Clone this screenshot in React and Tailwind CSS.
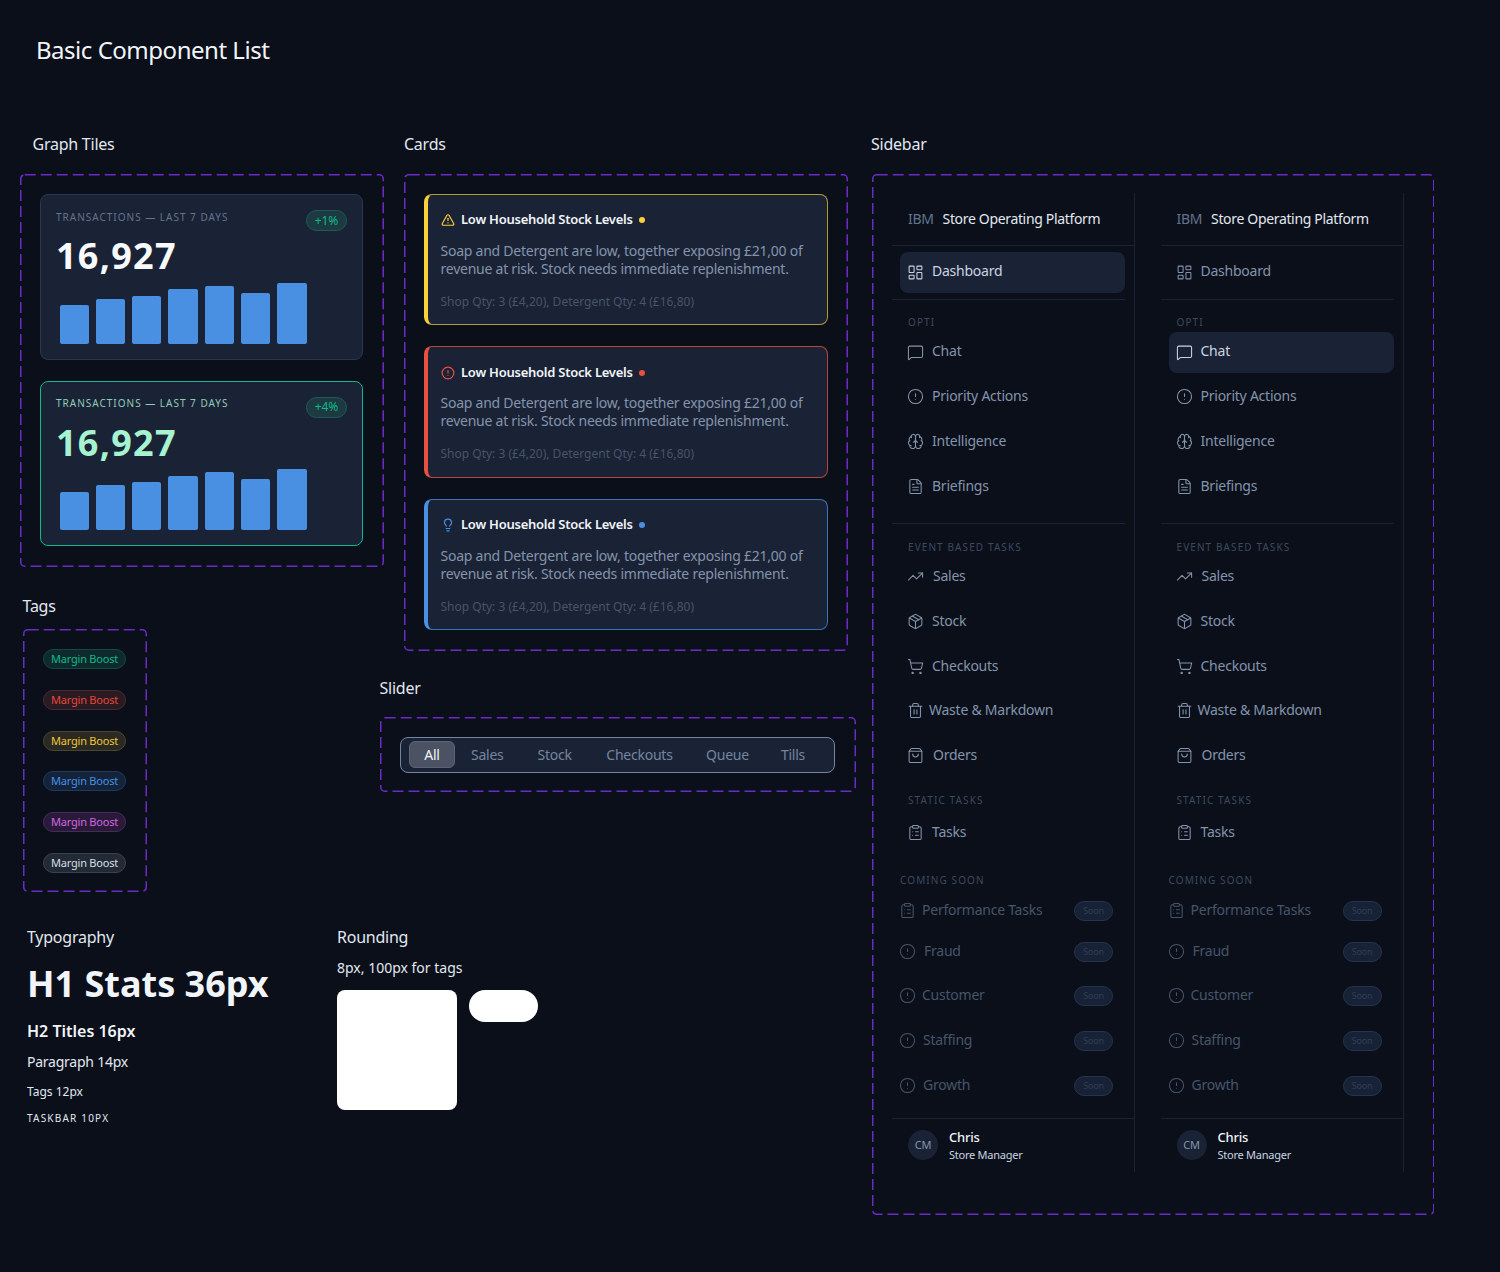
import {
  LayoutDashboard, MessageSquare, CircleAlert, Brain, FileText, TrendingUp, Package,
  ShoppingCart, Trash2, ShoppingBag, ClipboardList, TriangleAlert, Lightbulb,
} from "lucide-react";

const bars = [38.5, 45, 48, 54.5, 58, 51, 61];

function DashedBox({ className, children }) {
  return (
    <div className={`relative ${className}`}>
      <svg className="absolute inset-0 w-full h-full pointer-events-none" fill="none">
        <rect
          className="[x:0.75px] [y:0.75px] [width:calc(100%_-_1.5px)] [height:calc(100%_-_1.5px)] [rx:4px]"
          stroke="#6a2cc8"
          strokeWidth="1.5"
          strokeDasharray="11 5"
        />
      </svg>
      {children}
    </div>
  );
}

function GraphTile({ green, badge }) {
  return (
    <div className={`relative h-[165.5px] w-[323px] rounded-lg border bg-[#1a2236] ${green ? "border-[#10b78f]" : "border-[#2a3750]"}`}>
      <div className={`absolute left-[15px] text-[10px] leading-[14px] tracking-[1px] ${green ? "top-[14px] text-[#8fcdb5]" : "top-[15px] text-[#64748b]"}`}>
        TRANSACTIONS — LAST 7 DAYS
      </div>
      <div className="absolute right-[15px] top-[15px] flex h-[21px] w-[41px] items-center justify-center rounded-full border border-[#1f5a55] bg-[#1c3a41] text-[12px] tracking-normal text-[#10b98a]">
        {badge}
      </div>
      <div className={`pl-[15px] pt-[39px] text-[36px] font-bold leading-[44px] tracking-[0.035em] ${green ? "text-[#a7f3d0]" : "text-[#f8fafc]"}`}>
        16,927
      </div>
      <div className="absolute bottom-[15px] left-[18.5px] flex items-end gap-[7px]">
        {bars.map((h, i) => (
          <div key={i} className="w-[29.3px] rounded-[2px] bg-[#4a90e2]" style={{ height: h }} />
        ))}
      </div>
    </div>
  );
}

function AlertCard({ Icon, border, left, text, dot }) {
  return (
    <div className={`h-[131.5px] w-[404px] rounded-lg border border-l-4 bg-[#1a2236] pl-[12.5px] ${border} ${left}`}>
      <div className="flex h-[50px] items-center pt-[1px]">
        <Icon size={14} className={text} />
        <span className="ml-[6.5px] text-[13px] font-semibold text-[#f1f5f9]">Low Household Stock Levels</span>
        <span className={`ml-[6px] h-[6px] w-[6px] rounded-full ${dot}`} />
      </div>
      <p className="mt-[-3px] w-[380px] text-[14px] leading-[18px] text-[#8494ab]">
        Soap and Detergent are low, together exposing £21,00 of revenue at risk. Stock needs immediate replenishment.
      </p>
      <p className="mt-[16px] text-[12px] leading-[16px] tracking-normal text-[#475569]">
        Shop Qty: 3 (£4,20), Detergent Qty: 4 (£16,80)
      </p>
    </div>
  );
}

function Tag({ className, children }) {
  return (
    <div className={`flex h-[20px] w-[83px] items-center justify-center rounded-full border text-[11px] tracking-[-0.02em] ${className}`}>
      {children}
    </div>
  );
}

function NavItem({ Icon, label, gap, active, soon, dim, nudge = "", className = "" }) {
  return (
    <div
      className={`flex items-center ${gap} ${active ? "rounded-lg bg-[#1a2236] text-[#cbd5e1]" : dim ? "text-[#475569]" : "text-[#8494ab]"} ${className}`}
    >
      <Icon size={17} strokeWidth={1.5} className="mx-[-1px] shrink-0" />
      <span className={`text-[14px] ${nudge}`}>{label}</span>
      {soon && (
        <span className="ml-auto mr-[11px] flex h-[20px] w-[39px] items-center justify-center rounded-full border border-[#253350] bg-[#182236] text-[9px] text-[#2f3e56]">
          Soon
        </span>
      )}
    </div>
  );
}

function SectionLabel({ className, children }) {
  return <div className={`text-[10px] leading-[14px] tracking-[1.1px] text-[#3d4a5e] ${className}`}>{children}</div>;
}

function Sidebar({ chatActive, className }) {
  return (
    <div className={`h-[979px] w-[243px] border-r border-[#1a2236] ${className}`}>
      <div className="flex h-[53px] items-center border-b border-[#1a2236] pb-[1px] pl-[16px] text-[14px] tracking-[-0.024em]">
        <span className="text-[#64748b]">IBM</span>
        <span className="ml-[9px] text-[#e2e8f0]">Store Operating Platform</span>
      </div>
      <div className="mr-[9px] border-b border-[#1a2236] pb-[6px] pt-[6px]">
        <NavItem
          Icon={LayoutDashboard}
          label="Dashboard"
          gap="gap-[9px]"
          nudge="pb-[4px]"
          active={!chatActive}
          className="ml-[8px] h-[41px] pl-[8px]"
        />
      </div>
      <SectionLabel className="ml-[16px] mt-[15px]">OPTI</SectionLabel>
      <div className="mr-[9px] border-b border-[#1a2236] pb-[16px]">
        <NavItem Icon={MessageSquare} label="Chat" gap="gap-[9px]" nudge="pb-[4px]" active={chatActive} className="ml-[8px] mt-[3px] h-[41px] pl-[8px]" />
        <NavItem Icon={CircleAlert} label="Priority Actions" gap="gap-[9px]" nudge="pb-[2px]" className="ml-[16px] mt-[3px] h-[41px]" />
        <NavItem Icon={Brain} label="Intelligence" gap="gap-[9px]" nudge="pb-[2px]" className="ml-[16px] mt-[4px] h-[41px]" />
        <NavItem Icon={FileText} label="Briefings" gap="gap-[9px]" nudge="pb-[2px]" className="ml-[16px] mt-[4px] h-[41px]" />
      </div>
      <SectionLabel className="ml-[16px] mt-[16px]">EVENT BASED TASKS</SectionLabel>
      <NavItem Icon={TrendingUp} label="Sales" gap="gap-[10px]" nudge="pb-[2px]" className="ml-[16px] mt-[2px] h-[41px]" />
      <NavItem Icon={Package} label="Stock" gap="gap-[9px]" nudge="pb-[2px]" className="ml-[16px] mt-[4px] h-[41px]" />
      <NavItem Icon={ShoppingCart} label="Checkouts" gap="gap-[9px]" nudge="pb-[2px]" className="ml-[16px] mt-[4px] h-[41px]" />
      <NavItem Icon={Trash2} label="Waste & Markdown" gap="gap-[6px]" nudge="pb-[2px]" className="ml-[16px] mt-[3px] h-[41px]" />
      <NavItem Icon={ShoppingBag} label="Orders" gap="gap-[10px]" nudge="pb-[2px]" className="ml-[16px] mt-[4px] h-[41px]" />
      <SectionLabel className="ml-[16px] mt-[17px]">STATIC TASKS</SectionLabel>
      <NavItem Icon={ClipboardList} label="Tasks" gap="gap-[9px]" nudge="pb-[2px]" className="ml-[16px] mt-[5px] h-[41px]" />
      <SectionLabel className="ml-[8px] mt-[20px]">COMING SOON</SectionLabel>
      <div className="mr-[10px]">
        <NavItem dim soon Icon={ClipboardList} label="Performance Tasks" gap="gap-[7px]" nudge="pb-[2px]" className="ml-[8px] mt-[3px] h-[41px]" />
        <NavItem dim soon Icon={CircleAlert} label="Fraud" gap="gap-[9px]" nudge="pb-[2px]" className="ml-[8px] h-[41px]" />
        <NavItem dim soon Icon={CircleAlert} label="Customer" gap="gap-[7px]" nudge="pb-[2px]" className="ml-[8px] mt-[3px] h-[41px]" />
        <NavItem dim soon Icon={CircleAlert} label="Staffing" gap="gap-[8px]" nudge="pb-[2px]" className="ml-[8px] mt-[4px] h-[41px]" />
        <NavItem dim soon Icon={CircleAlert} label="Growth" gap="gap-[8px]" nudge="pb-[2px]" className="ml-[8px] mt-[4px] h-[41px]" />
      </div>
      <div className="mt-[12px] flex items-center border-t border-[#1a2236] pl-[16px] pt-[9px]">
        <div className="mb-[2px] flex h-[30px] w-[30px] items-center justify-center rounded-full bg-[#1a2236] text-[11px] text-[#8494ab]">CM</div>
        <div className="ml-[11px]">
          <div className="text-[13px] font-medium leading-[18px] text-[#f1f5f9]">Chris</div>
          <div className="text-[11px] leading-[18px] text-[#cbd5e1]">Store Manager</div>
        </div>
      </div>
    </div>
  );
}

export default function App() {
  return (
    <div className="h-[1272px] w-[1500px] overflow-hidden bg-[#0a0f1a] font-['Noto_Sans',sans-serif] tracking-[-0.015em] text-[#e2e8f0]">
      <h1 className="ml-[36px] pt-[35px] text-[24px] leading-[30px] tracking-[-0.02em] text-[#f1f5f9]">Basic Component List</h1>

      <div className="mt-[69px] flex items-start">
        <div className="w-[871px] shrink-0">
          <div className="flex items-start">
            <div className="w-[404px] shrink-0">
              <h2 className="ml-[32.5px] text-[16px] leading-[20px]">Graph Tiles</h2>
              <DashedBox className="ml-[19.5px] mt-[20px] flex h-[393px] w-[364px] flex-col gap-[21px] pl-[20.5px] pt-[20px]">
                <GraphTile badge="+1%" />
                <GraphTile green badge="+4%" />
              </DashedBox>
              <h2 className="ml-[22.5px] mt-[29px] text-[16px] leading-[20px]">Tags</h2>
              <DashedBox className="ml-[22.5px] mt-[13px] flex h-[263px] w-[124px] flex-col gap-[20.7px] pl-[20.5px] pt-[20.4px]">
                <Tag className="border-[#0f4a44] bg-[#0f2a2c] text-[#10b98a]">Margin Boost</Tag>
                <Tag className="border-[#4a2a30] bg-[#2a1a22] text-[#e5483a]">Margin Boost</Tag>
                <Tag className="border-[#4a4530] bg-[#2a2a22] text-[#f0c63a]">Margin Boost</Tag>
                <Tag className="border-[#1f3a5c] bg-[#12233a] text-[#4a90e2]">Margin Boost</Tag>
                <Tag className="border-[#472a5c] bg-[#2a1a3a] text-[#d366e0]">Margin Boost</Tag>
                <Tag className="border-[#3a4250] bg-[#222a36] text-[#d8dee8]">Margin Boost</Tag>
              </DashedBox>
            </div>
            <div>
              <h2 className="text-[16px] leading-[20px]">Cards</h2>
              <DashedBox className="mt-[20px] flex h-[477px] w-[444px] flex-col gap-[21px] pl-[20px] pt-[19.5px]">
                <AlertCard Icon={TriangleAlert} border="border-[#b59a34]" left="border-l-[#fbd038]" text="text-[#fbd038]" dot="bg-[#fbd038]" />
                <AlertCard Icon={CircleAlert} border="border-[#b8443a]" left="border-l-[#e8503f]" text="text-[#e8503f]" dot="bg-[#e8503f]" />
                <AlertCard Icon={Lightbulb} border="border-[#3a74b8]" left="border-l-[#4a90e2]" text="text-[#4a90e2]" dot="bg-[#4a90e2]" />
              </DashedBox>
              <h2 className="ml-[-24.5px] mt-[27px] text-[16px] leading-[20px]">Slider</h2>
              <DashedBox className="ml-[-24.5px] mt-[19px] h-[75px] w-[476px] pl-[20.5px] pt-[19.5px]">
                <div className="flex h-[36px] w-[435px] items-center rounded-lg border border-[#74869f] bg-[#1a2236] pl-[8px] text-[14px] text-[#74869f]">
                  <span className="flex h-[27px] w-[46px] items-center justify-center rounded-md border border-[#5a6274] bg-[#4b5263] text-[#f1f5f9]">All</span>
                  <span className="ml-[16px]">Sales</span>
                  <span className="ml-[34px]">Stock</span>
                  <span className="ml-[34.5px]">Checkouts</span>
                  <span className="ml-[33.5px]">Queue</span>
                  <span className="ml-[32px]">Tills</span>
                </div>
              </DashedBox>
            </div>
          </div>

          <div className="mt-[35px] flex items-start">
            <div className="ml-[27px] w-[310px] shrink-0">
              <h2 className="text-[16px] leading-[20px]">Typography</h2>
              <div className="mt-[15px] text-[36px] font-bold leading-[44px] tracking-normal text-[#f1f5f9]">H1 Stats 36px</div>
              <div className="mt-[15px] text-[16px] font-semibold leading-[20px] tracking-normal text-[#f1f5f9]">H2 Titles 16px</div>
              <div className="mt-[11px] text-[14px] leading-[20px]">Paragraph 14px</div>
              <div className="mt-[12px] text-[12px] leading-[16px] tracking-normal">Tags 12px</div>
              <div className="mt-[11px] text-[10px] leading-[14px] tracking-[1.2px]">TASKBAR 10PX</div>
            </div>
            <div>
              <h2 className="text-[16px] leading-[20px]">Rounding</h2>
              <div className="mt-[11px] text-[14px] leading-[20px] tracking-normal">8px, 100px for tags</div>
              <div className="mt-[12px] flex items-start gap-[12px]">
                <div className="h-[120px] w-[120px] rounded-lg bg-white" />
                <div className="h-[32px] w-[69px] rounded-full bg-white" />
              </div>
            </div>
          </div>
        </div>

        <div>
          <h2 className="text-[16px] leading-[20px]">Sidebar</h2>
          <DashedBox className="ml-[0.5px] mt-[20px] flex h-[1041px] w-[562.5px] items-start pl-[20.5px] pt-[19px]">
            <Sidebar />
            <Sidebar chatActive className="ml-[25.5px]" />
          </DashedBox>
        </div>
      </div>
    </div>
  );
}
